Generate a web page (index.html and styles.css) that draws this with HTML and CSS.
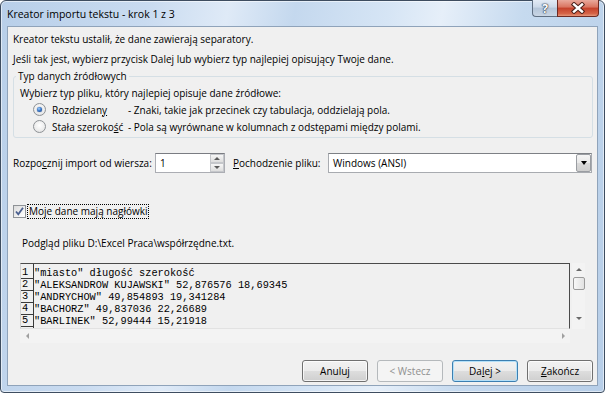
FILE: index.html
```html
<!DOCTYPE html>
<html lang="pl">
<head>
    <meta charset="UTF-8">
    <title>Kreator importu tekstu - krok 1 z 3</title>
    <link rel="stylesheet" href="styles.css">
</head>
<body>

<div class="window">
    <div class="titlebar">
        <div class="title">Kreator importu tekstu - krok 1 z 3</div>
        <div class="caption-buttons">
            <div class="cap-btn help">?</div>
            <div class="cap-btn close">
                <svg width="16" height="12" viewBox="0 0 16 12">
                    <path d="M4 2.5 L12 9.5 M12 2.5 L4 9.5" stroke="#4a2019" stroke-width="4.4" stroke-linecap="square" fill="none"/>
                    <path d="M4 2.5 L12 9.5 M12 2.5 L4 9.5" stroke="#ffffff" stroke-width="2.4" stroke-linecap="square" fill="none"/>
                </svg>
            </div>
        </div>
    </div>

    <div class="client">
        <div class="intro">
            <p>Kreator tekstu ustalił, że dane zawierają separatory.</p>
            <p>Jeśli tak jest, wybierz przycisk Dalej lub wybierz typ najlepiej opisujący Twoje dane.</p>
        </div>

        <fieldset class="group">
            <legend>Typ danych źródłowych</legend>
            <div class="group-body">
                <div class="group-text">Wybierz typ pliku, który najlepiej opisuje dane źródłowe:</div>
                <div class="radio-row">
                    <span class="radio checked"></span>
                    <span class="radio-label">Rozdzielan<u>y</u></span>
                    <span class="radio-desc">- Znaki, takie jak przecinek czy tabulacja, oddzielają pola.</span>
                </div>
                <div class="radio-row">
                    <span class="radio"></span>
                    <span class="radio-label">Stała szeroko<u>ś</u>ć</span>
                    <span class="radio-desc">- Pola są wyrównane w kolumnach z odstępami między polami.</span>
                </div>
            </div>
        </fieldset>

        <div class="start-row">
            <span class="lbl-start">Rozpo<u>c</u>znij import od wiersza:</span>
            <div class="spin">
                <span class="spin-value">1</span>
                <div class="spin-buttons">
                    <span class="spin-btn up"></span>
                    <span class="spin-btn down"></span>
                </div>
            </div>
            <span class="lbl-origin"><u>P</u>ochodzenie pliku:</span>
            <div class="combo">
                <span class="combo-value">Windows (ANSI)</span>
                <span class="combo-arrow"></span>
            </div>
        </div>

        <div class="check-row">
            <span class="checkbox">
                <svg width="11" height="11" viewBox="0 0 11 11">
                    <path d="M2 5.5 L4.3 8.3 L9 1.8" stroke="#4a5f8f" stroke-width="1.8" fill="none"/>
                </svg>
            </span>
            <span class="check-label">Moje dane ma<u>j</u>ą nagłówki</span>
        </div>

        <div class="preview-title">Podgląd pliku D:\Excel Praca\współrzędne.txt.</div>

        <div class="preview">
            <div class="preview-main">
                <div class="preview-text">
                    <div class="nums">
                        <span class="num">1</span>
                        <span class="num">2</span>
                        <span class="num">3</span>
                        <span class="num">4</span>
                        <span class="num">5</span>
                    </div>
                    <div class="data">
                        <div class="data-line">"miasto" długość szerokość</div>
                        <div class="data-line">"ALEKSANDROW KUJAWSKI" 52,876576 18,69345</div>
                        <div class="data-line">"ANDRYCHOW" 49,854893 19,341284</div>
                        <div class="data-line">"BACHORZ" 49,837036 22,26689</div>
                        <div class="data-line">"BARLINEK" 52,99444 15,21918</div>
                    </div>
                </div>
                <div class="hscroll">
                    <span class="arrow-left"></span>
                    <span class="arrow-right"></span>
                </div>
            </div>
            <div class="vscroll">
                <span class="arrow-up"></span>
                <span class="thumb"></span>
                <span class="arrow-down"></span>
            </div>
        </div>

        <div class="buttons">
            <button class="btn">Anuluj</button>
            <button class="btn disabled">&lt; Wstecz</button>
            <button class="btn default">Da<u>l</u>ej &gt;</button>
            <button class="btn"><u>Z</u>akończ</button>
        </div>
    </div>
</div>

</body>
</html>
```

FILE: styles.css
```css
body {
    margin: 0;
    padding: 0;
    width: 605px;
    height: 393px;
    overflow: hidden;
    background: #ffffff;
    font-family: "Open Sans", "Noto Sans", sans-serif;
    font-size: 10px;
    color: #000000;
}

.window {
    box-sizing: border-box;
    width: 605px;
    height: 393px;
    border: 1px solid #3e4d60;
    border-radius: 6px 6px 4px 4px;
    background: linear-gradient(100deg, #b8cfe9 0%, #c9dbf0 22%, #dfeaf7 34%, #c4d8ee 44%, #d6e5f5 58%, #e6eff9 66%, #c6daef 78%, #b7cee8 100%);
    box-shadow: inset 0 0 0 1px rgba(255, 255, 255, 0.55);
    display: flex;
    flex-direction: column;
}

.titlebar {
    height: 25px;
    display: flex;
    align-items: flex-start;
    padding-left: 6px;
    padding-right: 5px;
}

.title {
    font-size: 10.5px;
    line-height: 26px;
    color: #000000;
}

.caption-buttons {
    margin-left: auto;
    margin-top: -1px;
    display: flex;
}

.cap-btn {
    height: 17px;
    box-sizing: border-box;
    border: 1px solid #5f6f82;
    border-top: none;
    display: flex;
    align-items: center;
    justify-content: center;
}

.help {
    width: 25px;
    border-right: none;
    border-radius: 0 0 0 4px;
    background: linear-gradient(#e3ebf5 0%, #ccd9e8 45%, #b4c5d9 50%, #c9d6e5 100%);
    color: #ffffff;
    font-weight: bold;
    font-size: 12px;
    text-shadow: 0 0 1px #2c3a4c, 0 0 1px #2c3a4c, 0 0 2px #2c3a4c;
    line-height: 17px;
}

.close {
    width: 42px;
    border-color: #6e2a22;
    border-radius: 0 0 4px 0;
    background: linear-gradient(#e9a99c 0%, #d9735f 45%, #c4402a 50%, #d56448 85%, #e4977b 100%);
}

.client {
    flex: 1;
    margin: 0 6px 6px 6px;
    border: 1px solid #8fa3ba;
    background: #f0f0f0;
    display: flex;
    flex-direction: column;
    padding: 2px 4px 0 5px;
}

.intro p {
    margin: 0;
    line-height: 20px;
}

.group {
    margin: 0;
    padding: 0 6px 2px 6px;
    border: 1px solid #d5dfe5;
    border-radius: 3px;
    min-width: 0;
}

.group legend {
    padding: 0 2px;
    margin-left: -4px;
    line-height: 15px;
}

.group-text {
    padding-top: 1px;
    line-height: 16px;
}

.radio-row {
    display: flex;
    align-items: center;
    height: 17px;
    padding-left: 13px;
}

.radio {
    box-sizing: border-box;
    width: 13px;
    height: 13px;
    border-radius: 50%;
    border: 1px solid #8e9296;
    background: radial-gradient(circle at 50% 40%, #ffffff 0%, #ececec 60%, #d8d8d8 100%);
    display: flex;
    align-items: center;
    justify-content: center;
}

.radio.checked::after {
    content: "";
    width: 5px;
    height: 5px;
    border-radius: 50%;
    background: radial-gradient(circle at 40% 35%, #a6d2ff 0%, #3a78c8 45%, #153e80 100%);
    box-shadow: 0 0 1px #0c2f66;
}

.radio-label {
    width: 76px;
    margin-left: 6px;
}

.start-row {
    display: flex;
    align-items: center;
    height: 20px;
    margin-top: 15px;
}

.lbl-start {
    width: 142px;
}

.spin {
    box-sizing: border-box;
    width: 70px;
    height: 20px;
    border: 1px solid #abadb3;
    border-top-color: #7a7c82;
    background: #ffffff;
    display: flex;
    align-items: center;
}

.spin-value {
    flex: 1;
    padding-left: 4px;
}

.spin-buttons {
    width: 14px;
    height: 18px;
    display: flex;
    flex-direction: column;
}

.spin-btn {
    flex: 1;
    box-sizing: border-box;
    border: 1px solid #c5c7cb;
    background: linear-gradient(#f6f6f6, #dedede);
    display: flex;
    align-items: center;
    justify-content: center;
}

.spin-btn.up::after {
    content: "";
    border-left: 3px solid transparent;
    border-right: 3px solid transparent;
    border-bottom: 3px solid #5a5a5a;
}

.spin-btn.down::after {
    content: "";
    border-left: 3px solid transparent;
    border-right: 3px solid transparent;
    border-top: 3px solid #5a5a5a;
}

.lbl-origin {
    width: 95px;
    margin-left: 8px;
}

.combo {
    box-sizing: border-box;
    width: 264px;
    height: 20px;
    border: 1px solid #a8abb0;
    border-top-color: #7d8085;
    background: #ffffff;
    display: flex;
    align-items: center;
}

.combo-value {
    flex: 1;
    padding-left: 4px;
}

.combo-arrow {
    box-sizing: border-box;
    width: 15px;
    height: 18px;
    border: 1px solid #9a9da2;
    border-radius: 2px;
    background: linear-gradient(#f5f5f5 0%, #e9e9e9 50%, #dadada 51%, #cecece 100%);
    display: flex;
    align-items: center;
    justify-content: center;
}

.combo-arrow::after {
    content: "";
    border-left: 3.5px solid transparent;
    border-right: 3.5px solid transparent;
    border-top: 4px solid #000000;
}

.check-row {
    display: flex;
    align-items: center;
    height: 15px;
    margin-top: 31px;
}

.checkbox {
    box-sizing: border-box;
    width: 13px;
    height: 13px;
    border: 1px solid #8e9296;
    background: linear-gradient(135deg, #dcdcdc, #ffffff);
    display: flex;
    align-items: center;
    justify-content: center;
}

.check-label {
    margin-left: 1px;
    padding: 0 1px;
    border: 1px dotted #000000;
    line-height: 13px;
}

.preview-title {
    margin-top: 16px;
    margin-left: 9px;
    line-height: 16px;
}

.preview {
    display: flex;
    margin-top: 12px;
    margin-left: 7px;
    height: 80px;
}

.preview-main {
    width: 550px;
    display: flex;
    flex-direction: column;
}

.preview-text {
    box-sizing: border-box;
    height: 66px;
    border-top: 1px solid #4a4a4a;
    border-right: 1px solid #4a4a4a;
    border-left: 1px solid #d2d2d2;
    border-bottom: 1px solid #e2e2e2;
    display: flex;
    overflow: hidden;
    font-family: "Liberation Mono", "DejaVu Sans Mono", monospace;
    font-size: 10.3px;
    color: #000000;
}

.nums {
    width: 12px;
    border-right: 1px solid #3a3a3a;
    display: flex;
    flex-direction: column;
    padding-top: 3px;
}

.num {
    box-sizing: border-box;
    height: 12px;
    line-height: 11px;
    padding-left: 1px;
    border-bottom: 1px solid #3a3a3a;
}

.data {
    padding-top: 3px;
}

.data-line {
    height: 12px;
    line-height: 12px;
    white-space: pre;
}

.hscroll {
    flex: 1;
    display: flex;
    align-items: center;
    justify-content: space-between;
    padding: 0 5px 0 6px;
    background: #f3f3f3;
}

.arrow-left {
    border-top: 3px solid transparent;
    border-bottom: 3px solid transparent;
    border-right: 3px solid #a0a0a0;
}

.arrow-right {
    border-top: 3px solid transparent;
    border-bottom: 3px solid transparent;
    border-left: 3px solid #a0a0a0;
}

.vscroll {
    width: 13px;
    height: 66px;
    margin-left: 2px;
    background: #f3f3f3;
    display: flex;
    flex-direction: column;
    align-items: center;
    padding-top: 5px;
    box-sizing: border-box;
}

.arrow-up {
    border-left: 3px solid transparent;
    border-right: 3px solid transparent;
    border-bottom: 3px solid #6a6a6a;
}

.thumb {
    box-sizing: border-box;
    width: 12px;
    height: 13px;
    margin-top: 6px;
    border: 1px solid #9b9b9b;
    border-radius: 2px;
    background: linear-gradient(90deg, #f8f8f8, #e2e2e2);
}

.arrow-down {
    margin-top: 27px;
    border-left: 3px solid transparent;
    border-right: 3px solid transparent;
    border-top: 3px solid #6a6a6a;
}

.buttons {
    display: flex;
    justify-content: flex-end;
    gap: 9px;
    margin-top: 17px;
}

.btn {
    box-sizing: border-box;
    width: 66px;
    height: 22px;
    padding: 0;
    border: 1px solid #707070;
    border-radius: 3px;
    background: linear-gradient(#f2f2f2 0%, #ebebeb 50%, #dddddd 51%, #cfcfcf 100%);
    box-shadow: inset 0 0 0 1px rgba(255, 255, 255, 0.75);
    font-family: "Open Sans", "Noto Sans", sans-serif;
    font-size: 10px;
    color: #000000;
}

.btn.default {
    border-color: #3c7fb1;
    box-shadow: inset 0 0 0 1px #b4e0f8;
}

.btn.disabled {
    border-color: #b5b9bc;
    background: #f4f4f4;
    box-shadow: none;
    color: #8f8f8f;
}
```
